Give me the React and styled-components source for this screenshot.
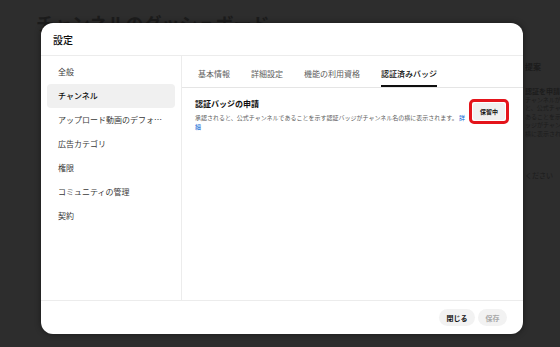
import React from "react";
import styled, { createGlobalStyle } from "styled-components";

const Global = createGlobalStyle`
  html, body { margin: 0; padding: 0; }
  body {
    width: 560px;
    height: 347px;
    overflow: hidden;
    background: #2d2d2d;
    font-family: "Noto Sans CJK JP", "Noto Sans", sans-serif;
  }
  * { box-sizing: border-box; }
`;

const Page = styled.div`
  position: relative;
  width: 560px;
  height: 347px;
  overflow: hidden;
  display: grid;
  grid-template-columns: 525px 1fr;
  background: #2d2d2d;
`;

const MainCol = styled.div`
  padding: 10px 0 0 36px;
`;

const PageTitle = styled.h1`
  margin: 0;
  font-size: 18px;
  line-height: 26px;
  font-weight: 700;
  color: #1c1c1c;
  white-space: nowrap;
`;

const SideCol = styled.div`
  padding-top: 61px;
  display: flex;
  flex-direction: column;
  color: #1c1c1c;
  white-space: nowrap;
  overflow: hidden;
`;

const SideHeading = styled.div`
  font-size: 8px;
  line-height: 12px;
  font-weight: 700;
`;

const SideSub = styled.div`
  margin-top: 13px;
  font-size: 7px;
  line-height: 10px;
  font-weight: 700;
`;

const SideLine = styled.div`
  font-size: 6px;
  line-height: 8.4px;
`;

const SideNote = styled.div`
  margin-top: 32px;
  font-size: 7px;
  line-height: 10px;
`;

const Modal = styled.div`
  position: absolute;
  left: 41px;
  top: 23px;
  width: 482px;
  height: 311px;
  background: #fff;
  border-radius: 12px;
  box-shadow: 0 0 6px rgba(0, 0, 0, 0.45);
  display: flex;
  flex-direction: column;
  overflow: hidden;
`;

const Header = styled.div`
  height: 33px;
  flex: none;
  display: flex;
  align-items: center;
  padding-left: 12px;
  border-bottom: 1px solid #ececec;
  font-size: 10px;
  font-weight: 500;
  color: #0f0f0f;
`;

const Body = styled.div`
  flex: 1;
  display: flex;
  min-height: 0;
`;

const Nav = styled.nav`
  width: 141px;
  flex: none;
  border-right: 1px solid #ececec;
  padding: 4px 6px;
  display: flex;
  flex-direction: column;
`;

const NavItem = styled.div`
  height: 24px;
  line-height: 24px;
  padding: 0 12px 0 11px;
  border-radius: 4px;
  font-size: 8px;
  white-space: nowrap;
  overflow: hidden;
  text-overflow: ellipsis;
  background: ${(p) => (p.$active ? "#f0f0f0" : "transparent")};
  color: ${(p) => (p.$active ? "#0f0f0f" : "#3a3a3a")};
  font-weight: ${(p) => (p.$active ? 500 : 400)};
`;

const Content = styled.div`
  flex: 1;
  display: flex;
  flex-direction: column;
`;

const Tabs = styled.div`
  height: 32px;
  flex: none;
  display: flex;
  gap: 21px;
  padding-left: 16px;
  border-bottom: 1px solid #e5e5e5;
`;

const Tab = styled.div`
  display: flex;
  align-items: center;
  padding-top: 5px;
  font-size: 8px;
  white-space: nowrap;
  border-bottom: 2px solid ${(p) => (p.$active ? "#0f0f0f" : "transparent")};
  color: ${(p) => (p.$active ? "#0f0f0f" : "#606060")};
  font-weight: ${(p) => (p.$active ? 500 : 400)};
`;

const Section = styled.div`
  display: flex;
  align-items: flex-start;
  padding: 11px 15px 0 13px;
`;

const TextCol = styled.div`
  width: 274px;
`;

const SectionTitle = styled.div`
  font-size: 8px;
  line-height: 10px;
  font-weight: 600;
  color: #0f0f0f;
`;

const Description = styled.div`
  margin-top: 4px;
  font-size: 6px;
  line-height: 9px;
  color: #606060;
  line-break: anywhere;
`;

const Link = styled.a`
  color: #065fd4;
  text-decoration: none;
`;

const Highlight = styled.div`
  margin-left: auto;
  border: 3px solid #e4141b;
  border-radius: 5px;
  padding: 1px;
  display: flex;
`;

const StatusChip = styled.div`
  height: 17px;
  padding: 0 7px;
  display: flex;
  align-items: center;
  background: #f0f0f0;
  border-radius: 3px;
  font-size: 6px;
  font-weight: 700;
  color: #0f0f0f;
  white-space: nowrap;
`;

const Footer = styled.div`
  height: 34px;
  flex: none;
  border-top: 1px solid #ececec;
  display: flex;
  justify-content: flex-end;
  align-items: center;
  gap: 3px;
  padding-right: 16px;
`;

const Button = styled.button`
  height: 17px;
  padding: 0 7.5px;
  border: none;
  border-radius: 9px;
  background: #f2f2f2;
  font-family: inherit;
  font-size: 7px;
  font-weight: 600;
  color: ${(p) => (p.disabled ? "#a8a8a8" : "#0f0f0f")};
  display: flex;
  align-items: center;
`;

const navItems = [
  "全般",
  "チャンネル",
  "アップロード動画のデフォルト設定",
  "広告カテゴリ",
  "権限",
  "コミュニティの管理",
  "契約",
];

const tabs = ["基本情報", "詳細設定", "機能の利用資格", "認証済みバッジ"];

export default function App() {
  return (
    <>
      <Global />
      <Page>
        <MainCol>
          <PageTitle>チャンネルのダッシュボード</PageTitle>
        </MainCol>
        <SideCol>
          <SideHeading>提案</SideHeading>
          <SideSub>認証を申請する</SideSub>
          <SideLine>チャンネルが承認さ</SideLine>
          <SideLine>と、公式チャンネル</SideLine>
          <SideLine>あることを示す認証</SideLine>
          <SideLine>ッジがチャンネル名</SideLine>
          <SideLine>横に表示されます。</SideLine>
          <SideNote>ください</SideNote>
        </SideCol>
        <Modal>
          <Header>設定</Header>
          <Body>
            <Nav>
              {navItems.map((item, i) => (
                <NavItem key={item} $active={i === 1}>
                  {item}
                </NavItem>
              ))}
            </Nav>
            <Content>
              <Tabs>
                {tabs.map((t, i) => (
                  <Tab key={t} $active={i === 3}>
                    {t}
                  </Tab>
                ))}
              </Tabs>
              <Section>
                <TextCol>
                  <SectionTitle>認証バッジの申請</SectionTitle>
                  <Description>
                    承認されると、公式チャンネルであることを示す認証バッジがチャンネル名の横に表示されます。{" "}
                    <Link href="#">詳細</Link>
                  </Description>
                </TextCol>
                <Highlight>
                  <StatusChip>保留中</StatusChip>
                </Highlight>
              </Section>
            </Content>
          </Body>
          <Footer>
            <Button>閉じる</Button>
            <Button disabled>保存</Button>
          </Footer>
        </Modal>
      </Page>
    </>
  );
}
